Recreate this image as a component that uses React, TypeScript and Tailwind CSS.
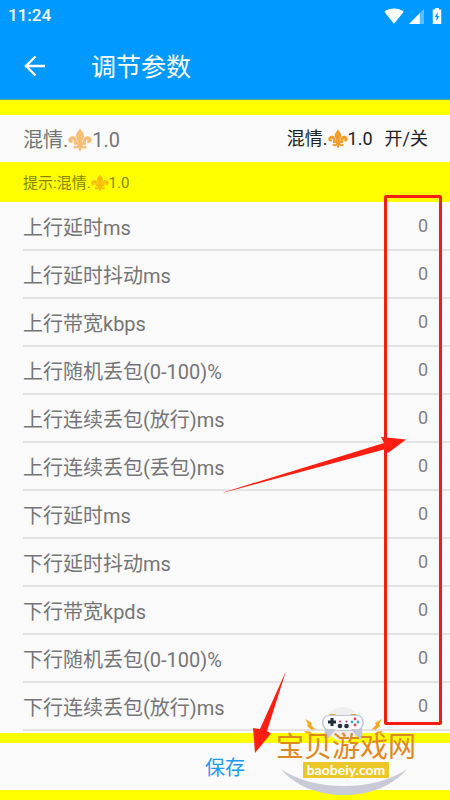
import { useState } from "react";

const fields = [
  { id: "up-delay", label: "上行延时ms" },
  { id: "up-jitter", label: "上行延时抖动ms" },
  { id: "up-bandwidth", label: "上行带宽kbps" },
  { id: "up-loss", label: "上行随机丢包(0-100)%" },
  { id: "up-pass", label: "上行连续丢包(放行)ms" },
  { id: "up-drop", label: "上行连续丢包(丢包)ms" },
  { id: "down-delay", label: "下行延时ms" },
  { id: "down-jitter", label: "下行延时抖动ms" },
  { id: "down-bandwidth", label: "下行带宽kpds" },
  { id: "down-loss", label: "下行随机丢包(0-100)%" },
  { id: "down-pass", label: "下行连续丢包(放行)ms" },
];

const FleurDeLis = ({ className }: { className: string }) => (
  <svg viewBox="0 0 24 24" className={className} aria-hidden="true">
    <path
      fill="currentColor"
      d="M12 .5c-1.400 2.200-4 4.500-4 7.400 0 2.300 1.700 3.900 2.100 6.300H8.900c.3-2.200-.5-5.800-4-6C2.300 8.100.3 9.900.3 12c0 1.700 1.200 3.100 2.800 3.100 1 0 1.700-.7 1.700-1.600 0-.7-.5-1.300-1.200-1.300.2-.9 2.700-.6 2.600 2H6v2.600h3.400c-.3 1.300-1.100 1.900-2 1.600-.3-1-2.100-.7-2.100.6 0 1.100 1.200 1.700 2.400 1.600 1.200-.1 2-.6 2.600-1.200.2 1.500.8 2.800 1.700 4.100.9-1.300 1.500-2.600 1.700-4.100.6.600 1.400 1.100 2.600 1.200 1.200.1 2.400-.5 2.400-1.600 0-1.300-1.800-1.600-2.100-.6-.9.3-1.700-.3-2-1.600H18v-2.600h-.2c-.1-2.600 2.400-2.900 2.600-2-.7 0-1.200.6-1.200 1.300 0 .9.7 1.600 1.700 1.600 1.600 0 2.800-1.400 2.800-3.100 0-2.100-2-3.900-4.600-3.800-3.500.2-4.300 3.800-4 6h-1.200c.4-2.400 2.100-4 2.100-6.300C16 5 13.400 2.700 12 .5z"
    />
  </svg>
);

const StatusBar = () => (
  <div className="flex h-8 items-center justify-between px-2 text-[17px] font-medium">
    <span>11:24</span>
    <div className="flex items-center">
      <svg viewBox="0 0 20 16" className="h-4 w-5" aria-hidden="true">
        <path fill="currentColor" d="M.3 3.800C6-.6 14-.6 19.700 3.800L10 15.700z" />
      </svg>
      <svg viewBox="0 0 15 15" className="ml-1 h-4 w-4" aria-hidden="true">
        <path fill="currentColor" opacity=".35" d="M15 1v14H1z" />
        <path fill="currentColor" d="M11 5v10H1z" />
      </svg>
      <svg viewBox="0 0 10 17" className="ml-2 h-4 w-2.5" aria-hidden="true">
        <path fill="currentColor" d="M3 0h4v1.500h2.500V17H.5V1.500H3z" />
        <path fill="#0099ff" d="M5.800 4.500L2.500 9.600h2L4.200 14l3.400-5.500H5.500z" />
      </svg>
    </div>
  </div>
);

const Watermark = () => (
  <div className="pointer-events-none absolute right-8 top-[706px] flex w-36 flex-col items-center">
    <svg viewBox="0 0 144 92" className="absolute left-0 top-0 h-[92px] w-36" aria-hidden="true">
      <circle cx="69" cy="18" r="17" fill="#eeeeee" />
      <path fill="#c8cad8" d="M7 63c16 11 38 17 63 17s47-6 63-17c-13 16-36 26-63 26S20 79 7 63z" />
      <g fill="#f2a922">
        <path d="M31 13l7 4-1 2 5 5-4-1 1 2-6-5 1-2z" />
        <path d="M108 13l-7 4 1 2-5 5 4-1-1 2 6-5-1-2z" />
        <path d="M30 25l6 .5 3 3-7-1.500z" />
        <path d="M109 25l-6 .5-3 3 7-1.500z" />
        <path d="M55 10l1-2h5l1 2zM76 10l1-2h5l1 2z" />
      </g>
      <path fill="#c3c6d4" d="M51 17l-.5 15 2.500 1.500 8-9h17l8 9 2.500-1.500-.5-15z" />
      <path fill="#c3c6d4" d="M55 9h28c9 0 9 14 1 15-3 .4-5-.5-7 1H61c-2-1.500-4-.6-7-1-8-1-8-15 1-15z" />
      <path fill="#fafafd" d="M55 10h28c7 0 7 12 1 13-3 .4-6-.5-8 1H62c-2-1.500-5-.6-8-1-6-1-6-13 1-13z" />
      <path fill="#1d2b3c" d="M56.500 12h3v2.500H62v3h-2.500V20h-3v-2.500H54v-3h2.500z" />
      <circle cx="66" cy="20" r="2.300" fill="#25303f" />
      <circle cx="72.500" cy="20" r="2.300" fill="#25303f" />
      <circle cx="66" cy="15.500" r="1" fill="#cf3850" />
      <circle cx="72.500" cy="15.500" r="1" fill="#cf3850" />
      <circle cx="81" cy="13" r="1.400" fill="#de4251" />
      <circle cx="81" cy="19" r="1.400" fill="#de4251" />
      <circle cx="78" cy="16" r="1.400" fill="#39a9c5" />
      <circle cx="84" cy="16" r="1.400" fill="#39a9c5" />
    </svg>
    <span className="relative mt-[30px] whitespace-nowrap text-[28px] leading-6 text-[#e08820]">宝贝游戏网</span>
    <span className="relative mt-0.5 whitespace-nowrap bg-[#ebc828] px-1 font-[Lato] text-sm font-bold leading-4 text-white">
      baobeiy.com
    </span>
  </div>
);

// Red marks pointing at the value column and the save button
const Annotations = () => (
  <>
    <div className="pointer-events-none absolute right-2 top-[195px] h-[530px] w-[58px] rounded-xs border-3 border-[#f51d12]" />
    <svg
      viewBox="0 0 184 58"
      className="pointer-events-none absolute right-[43px] top-[436px] h-[58px] w-[184px]"
      aria-hidden="true"
    >
      <path fill="#ff1f12" d="M0 56.500L161 7l-3-6 25 2.500L165 17l-2-4L1 56.500z" />
    </svg>
    <svg
      viewBox="0 0 36 86"
      className="pointer-events-none absolute right-[163px] top-[669px] h-[86px] w-9"
      aria-hidden="true"
    >
      <path fill="#ff1f12" d="M35 2L16 62l4 2.500L4 84 2 59l7 1z" />
    </svg>
  </>
);

export default function App() {
  const [enabled, setEnabled] = useState(false);

  return (
    <div className="relative flex min-h-screen flex-col overflow-hidden bg-[#ffff00] font-[Roboto,'Noto_Sans_CJK_SC',sans-serif] text-[#757575]">
      <header className="border-b border-[#4aa39d] bg-[#0099ff] text-white">
        <StatusBar />
        <div className="flex h-[67px] items-center pl-6">
          <button type="button" aria-label="返回" className="flex w-[67px]">
            <svg viewBox="0 0 22 22" className="size-[22px]" aria-hidden="true">
              <path fill="none" stroke="currentColor" strokeWidth="2.400" d="M21 11H3M11.500 1.500L2 11l9.500 9.500" />
            </svg>
          </button>
          <h1 className="pt-1 text-[25px] leading-8">调节参数</h1>
        </div>
      </header>

      <main className="flex flex-1 flex-col pt-[15px]">
        <div className="flex h-[47px] items-center justify-between bg-[#fafafa] pl-[23px] pr-[22px]">
          <span className="flex items-center pt-0.5 text-xl">
            混情.
            <FleurDeLis className="size-6 text-[#f9bd74]" />
            1.0
          </span>
          <button
            type="button"
            aria-pressed={enabled}
            onClick={() => setEnabled(!enabled)}
            className="flex items-center text-lg text-[#212121]"
          >
            混情.
            <FleurDeLis className="size-5 text-[#f49b28]" />
            1.0<span className="ml-3">开/关</span>
          </button>
        </div>

        <p className="flex h-10 items-center pl-[23px] pt-0.5 text-[15px] text-[#858500]">
          提示:混情.
          <FleurDeLis className="size-[18px] text-[#f8bd0c]" />
          1.0
        </p>

        <form className="flex flex-1 flex-col" onSubmit={(e) => e.preventDefault()}>
          <div className="bg-[#fafafa] pb-0.5 pl-[23px] pt-px">
            {fields.map((field) => (
              <div key={field.id} className="flex h-12 items-center justify-between border-b-2 border-[#e3e3e3] pr-[22px]">
                <label htmlFor={field.id} className="pt-1 text-xl">
                  {field.label}
                </label>
                <input
                  id={field.id}
                  type="text"
                  inputMode="numeric"
                  defaultValue="0"
                  className="w-10 bg-transparent text-right text-lg leading-6 text-[#808080] outline-none"
                />
              </div>
            ))}
          </div>
          <button type="submit" className="mb-2.5 mt-2.5 h-[47px] bg-[#fafafa] pt-0.5 text-xl text-[#1e9af5]">
            保存
          </button>
        </form>
      </main>

      <Annotations />
      <Watermark />
    </div>
  );
}
